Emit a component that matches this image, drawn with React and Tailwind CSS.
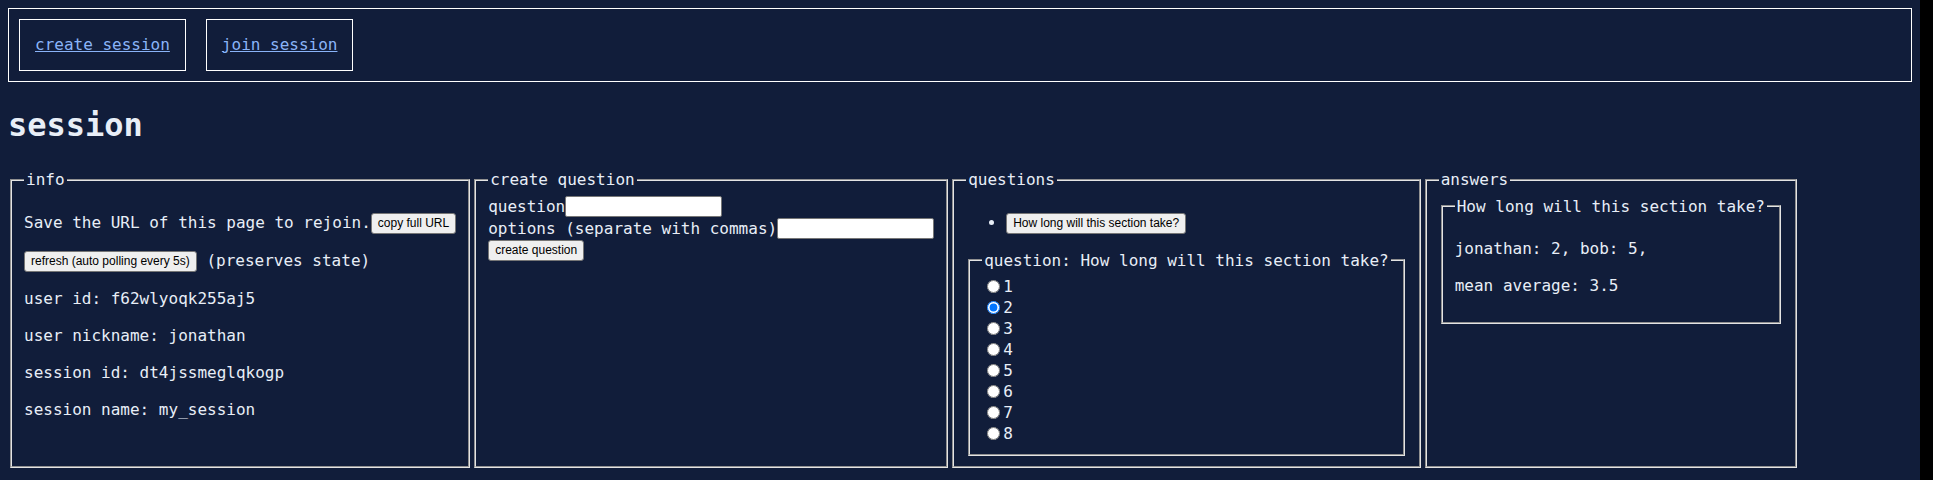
import React from "react";

const Btn = ({ children }) => (
  <button className="bg-[#efefef] text-black border border-[#767676] rounded-[3px] px-[6px] h-[21px] leading-[19px] align-middle text-[12px] [font-family:'Liberation_Sans',Arial,sans-serif]">
    {children}
  </button>
);

const Fieldset = ({ legend, children, className = "" }) => (
  <fieldset
    className={`border-2 [border-style:groove] border-[#e4e4e4] mx-[2px] px-3 pt-[5.6px] pb-[10px] ${className}`}
  >
    <legend className="px-[2px]">{legend}</legend>
    {children}
  </fieldset>
);

const options = ["1", "2", "3", "4", "5", "6", "7", "8"];

export default function App() {
  return (
    <div className="flex w-full h-[480px] bg-black overflow-hidden">
      <div className="w-[1920px] shrink-0 h-full bg-[#111d3a] text-[#e8eef7] p-2 text-[16px] leading-[21px] [font-family:'DejaVu_Sans_Mono',monospace]">
        <nav className="border border-white p-[10px] flex gap-5">
          <a href="#" className="block border border-white px-[15px] py-[15px] leading-[20px] text-[#8ab4f8] underline">
            create session
          </a>
          <a href="#" className="block border border-white px-[15px] py-[15px] leading-[20px] text-[#8ab4f8] underline">
            join session
          </a>
        </nav>

        <h1 className="text-[32px] font-bold leading-[44px] mt-[21px] mb-[22px]">session</h1>

        <div className="flex items-stretch">
          <Fieldset legend="info">
            <p className="my-4">
              Save the URL of this page to rejoin.<Btn>copy full URL</Btn>
            </p>
            <p className="my-4">
              <Btn>refresh (auto polling every 5s)</Btn> (preserves state)
            </p>
            <p className="my-4">user id: f62wlyoqk255aj5</p>
            <p className="my-4">user nickname: jonathan</p>
            <p className="my-4">session id: dt4jssmeglqkogp</p>
            <p className="my-4">session name: my_session</p>
          </Fieldset>

          <Fieldset legend="create question">
            <div className="flex items-center h-[22px]">
              <label>question</label>
              <input type="text" className="w-[157px] h-[21px] bg-white border border-[#767676] rounded-[2px] px-[2px] text-black text-[13px]" />
            </div>
            <div className="flex items-center h-[22px]">
              <label>options (separate with commas)</label>
              <input type="text" className="w-[157px] h-[21px] bg-white border border-[#767676] rounded-[2px] px-[2px] text-black text-[13px]" />
            </div>
            <div className="flex items-center h-[22px]">
              <Btn>create question</Btn>
            </div>
          </Fieldset>

          <Fieldset legend="questions">
            <ul className="list-disc pl-10 my-4">
              <li>
                <Btn>How long will this section take?</Btn>
              </li>
            </ul>
            <Fieldset legend="question: How long will this section take?">
              {options.map((o) => (
                <div key={o} className="flex items-center h-[21px]">
                  <input
                    type="radio"
                    name="q"
                    id={`opt-${o}`}
                    defaultChecked={o === "2"}
                    className="w-[13px] h-[13px] ml-[5px] mr-[3px]"
                  />
                  <label htmlFor={`opt-${o}`}>{o}</label>
                </div>
              ))}
            </Fieldset>
          </Fieldset>

          <Fieldset legend="answers">
            <Fieldset legend="How long will this section take?">
              <p className="my-4">jonathan: 2, bob: 5,</p>
              <p className="my-4">mean average: 3.5</p>
            </Fieldset>
          </Fieldset>
        </div>
      </div>
    </div>
  );
}
